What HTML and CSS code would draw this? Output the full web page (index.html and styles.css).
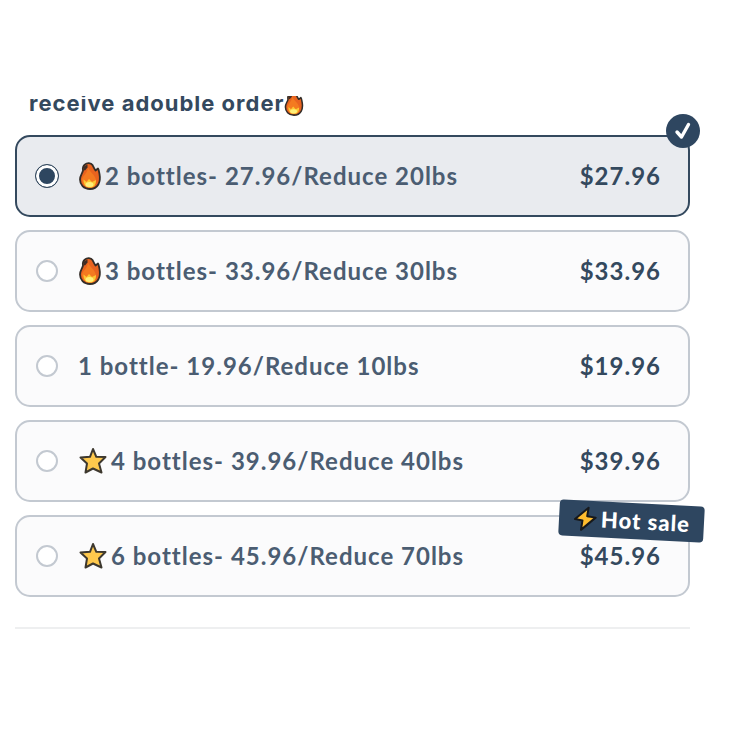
FILE: index.html
```
<!DOCTYPE html>
<html lang="en">

<head>
    <meta charset="UTF-8">
    <meta name="viewport" content="width=device-width, initial-scale=1.0">
    <title>Choose your bundle</title>
    <link rel="stylesheet" href="styles.css">
</head>

<body>
    <!-- shared icons -->
    <svg class="sprite" aria-hidden="true">
        <symbol id="fire" viewBox="0 0 22 28">
            <path d="M6 2.500C8 0.500 12 0.500 13.500 3C14.500 5 15 6.500 16.500 8.500L19 6.500C20 8 20 10 20.500 12C22 20 19 27 11 27C4.500 27 1 22.500 1 17.500C1 13.500 3.500 11.500 4 8.500C3.500 6 4 4 6 2.500Z" fill="#e9631f" stroke="#332d28" stroke-width="1.800" stroke-linejoin="round" />
            <path d="M4.500 8L5 4.500L8.500 2.500L8.500 5.500L6 8.500Z" fill="#3f2d26" />
            <path d="M9 5C10 10 16 12 17 18C17 23 15 25.500 11 25.500C6 25.500 3 22 3 17C4 13.500 9 11 9 5Z" fill="#f47a20" />
            <path d="M4.500 17.500L7.500 20L10 17L13 20L17 18C17 23 15 25.500 11 25.500C7 25.500 4.500 23 4.500 17.500Z" fill="#fdc832" />
            <ellipse cx="10.500" cy="22.500" rx="4" ry="2.500" fill="#fff07a" />
        </symbol>
        <symbol id="star" viewBox="0 0 28 28">
            <path d="M14 2L17.300 9.800L26.500 10L20 16.500L22.500 25.500L14 21.500L6.500 25.500L8 16.500L1.500 10.500L11 9.800Z" fill="#ffc94d" stroke="#3d382f" stroke-width="2" stroke-linejoin="round" />
        </symbol>
        <symbol id="bolt" viewBox="0 0 24 26">
            <path d="M15 2L2 14L9.500 15L8.500 24.500L22.500 11.500L14 10.500Z" fill="#ffbd2e" stroke="#17191c" stroke-width="2" stroke-linejoin="round" />
        </symbol>
    </svg>

    <main class="bundle">
        <h2 class="bundle-title">receive adouble order<svg class="title-icon"><use href="#fire" /></svg></h2>

        <form class="options">
            <label class="option">
                <input class="option-radio" type="radio" name="bundle" value="2" checked>
                <span class="option-name"><svg class="icon-fire"><use href="#fire" /></svg>2 bottles- 27.96/Reduce 20lbs</span>
                <span class="option-price">$27.96</span>
                <span class="check">
                    <svg class="check-icon" viewBox="0 0 18 20">
                        <path d="M3 11L7.500 16L14.500 3.500" fill="none" stroke="#fff" stroke-width="3.400" stroke-linecap="round" stroke-linejoin="round" />
                    </svg>
                </span>
            </label>

            <label class="option">
                <input class="option-radio" type="radio" name="bundle" value="3">
                <span class="option-name"><svg class="icon-fire"><use href="#fire" /></svg>3 bottles- 33.96/Reduce 30lbs</span>
                <span class="option-price">$33.96</span>
            </label>

            <label class="option">
                <input class="option-radio" type="radio" name="bundle" value="1">
                <span class="option-name">1 bottle- 19.96/Reduce 10lbs</span>
                <span class="option-price">$19.96</span>
            </label>

            <label class="option">
                <input class="option-radio" type="radio" name="bundle" value="4">
                <span class="option-name"><svg class="icon-star"><use href="#star" /></svg>4 bottles- 39.96/Reduce 40lbs</span>
                <span class="option-price">$39.96</span>
            </label>

            <label class="option">
                <input class="option-radio" type="radio" name="bundle" value="6">
                <span class="option-name"><svg class="icon-star"><use href="#star" /></svg>6 bottles- 45.96/Reduce 70lbs</span>
                <span class="option-price">$45.96</span>
                <span class="hot-sale"><svg class="icon-bolt"><use href="#bolt" /></svg>Hot sale</span>
            </label>
        </form>
    </main>
</body>

</html>
```
FILE: styles.css
```
* {
    box-sizing: border-box;
}

body {
    margin: 0;
    padding: 96px 60px 0 15px;
    background: #fff;
    color: #34495e;
    font-family: Lato, "Open Sans", sans-serif;
    letter-spacing: 1px;
}

.sprite {
    display: none;
}

.bundle-title {
    display: flex;
    align-items: flex-end;
    height: 20px;
    margin: 0 0 19px;
    padding-left: 14px;
    overflow: hidden;
    font-family: Inter, sans-serif;
    font-size: 22px;
    font-weight: 700;
    line-height: 26px;
    white-space: nowrap;
}

.title-icon {
    flex: none;
    width: 20px;
    height: 24px;
}

/* Options */
.options {
    display: flex;
    flex-direction: column;
    gap: 13px;
    padding-bottom: 30px;
    border-bottom: 2px solid #eeeff0;
}

.option {
    position: relative;
    display: flex;
    align-items: center;
    min-height: 82px;
    padding: 0 27px 0 18px;
    border: 2px solid #c3c9d1;
    border-radius: 15px;
    background: #fbfbfc;
    font-size: 24px;
    font-weight: 700;
    line-height: 30px;
    cursor: pointer;
}

.option:has(:checked) {
    border-color: #34495e;
    background: #e9ebef;
}

.option-radio {
    appearance: none;
    flex: none;
    width: 22px;
    height: 22px;
    margin: 0 20px 0 1px;
    border: 2px solid #c3c9d1;
    border-radius: 50%;
    background: #fff;
}

.option-radio:checked {
    width: 24px;
    height: 24px;
    margin: 0 19px 0 0;
    border: 1px solid #34495e;
    background: #2e4660;
    box-shadow: inset 0 0 0 3px #fff;
}

.option-name {
    display: flex;
    flex: 1;
    align-items: center;
    color: #4b5d72;
}

.icon-fire {
    width: 24px;
    height: 28px;
    margin-right: 3px;
}

.icon-star {
    width: 30px;
    height: 28px;
    margin-right: 3px;
}

/* Tick in the corner of the selected option */
.check {
    position: absolute;
    top: -23px;
    right: -12px;
    display: flex;
    align-items: center;
    justify-content: center;
    width: 34px;
    height: 34px;
    border-radius: 50%;
    background: #2e4660;
}

.check-icon {
    width: 18px;
    height: 20px;
}

.hot-sale {
    position: absolute;
    top: -14px;
    right: -16px;
    display: flex;
    align-items: center;
    gap: 4px;
    height: 36px;
    padding: 0 14px;
    border-radius: 4px;
    background: #2e4660;
    color: #fff;
    font-size: 22px;
    font-weight: 900;
    white-space: nowrap;
    transform: rotate(3deg);
}

.icon-bolt {
    width: 24px;
    height: 26px;
}
```
